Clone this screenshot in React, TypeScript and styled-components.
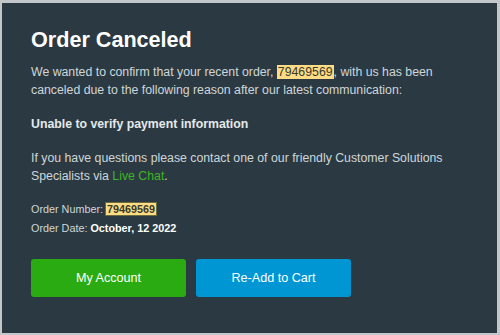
import React from "react";
import styled, { createGlobalStyle } from "styled-components";

const Global = createGlobalStyle`
  html, body { margin: 0; padding: 0; background: #c3c7c9; }
  body { font-family: "Liberation Sans", Arial, sans-serif; }
`;

const Panel = styled.div`
  margin: 3px 3px 2px 2px;
  height: 330px;
  box-sizing: border-box;
  background: #2b3a42;
  padding: 24px 29px 0 29px;
  color: #cfd6d9;
`;

const Title = styled.h1`
  margin: 0 0 10px 0;
  font-size: 21.6px;
  line-height: 26px;
  font-weight: 700;
  color: #ffffff;
`;

const Para = styled.p<{ $bold?: boolean; $last?: boolean }>`
  margin: 0 0 ${(p) => (p.$last ? 15 : 16)}px 0;
  font-size: 12.3px;
  line-height: 18px;
  font-weight: ${(p) => (p.$bold ? 700 : 400)};
  color: ${(p) => (p.$bold ? "#e4e9eb" : "#cfd6d9")};
`;

const Mark = styled.span<{ $boxed?: boolean }>`
  background: #fddc85;
  color: #3a3a2a;
  font-weight: ${(p) => (p.$boxed ? 700 : 400)};
  padding: 0 1px;
  ${(p) => (p.$boxed ? "outline: 1px solid #6b6a3a;" : "")}
`;

const Link = styled.a`
  color: #3fb524;
  text-decoration: none;
`;

const Meta = styled.div`
  font-size: 10.8px;
  line-height: 18.5px;
  color: #cfd6d9;
`;

const Strong = styled.span`
  font-weight: 700;
  color: #ffffff;
`;

const Buttons = styled.div`
  display: flex;
  gap: 10px;
  margin-top: 22px;
`;

const Button = styled.button<{ $color: string }>`
  width: 155px;
  height: 38px;
  border: none;
  border-radius: 3px;
  background: ${(p) => p.$color};
  color: #ffffff;
  font-family: "Liberation Sans", Arial, sans-serif;
  font-size: 12.6px;
  cursor: pointer;
`;

export default function App() {
  return (
    <>
      <Global />
      <Panel>
        <Title>Order Canceled</Title>
        <Para>
          We wanted to confirm that your recent order, <Mark>79469569</Mark>, with us has been
          canceled due to the following reason after our latest communication:
        </Para>
        <Para $bold>Unable to verify payment information</Para>
        <Para $last>
          If you have questions please contact one of our friendly Customer Solutions
          Specialists via <Link href="#">Live Chat</Link>.
        </Para>
        <Meta>
          Order Number: <Mark $boxed>79469569</Mark>
        </Meta>
        <Meta>
          Order Date: <Strong>October, 12 2022</Strong>
        </Meta>
        <Buttons>
          <Button $color="#2aab12">My Account</Button>
          <Button $color="#0096d4">Re-Add to Cart</Button>
        </Buttons>
      </Panel>
    </>
  );
}
